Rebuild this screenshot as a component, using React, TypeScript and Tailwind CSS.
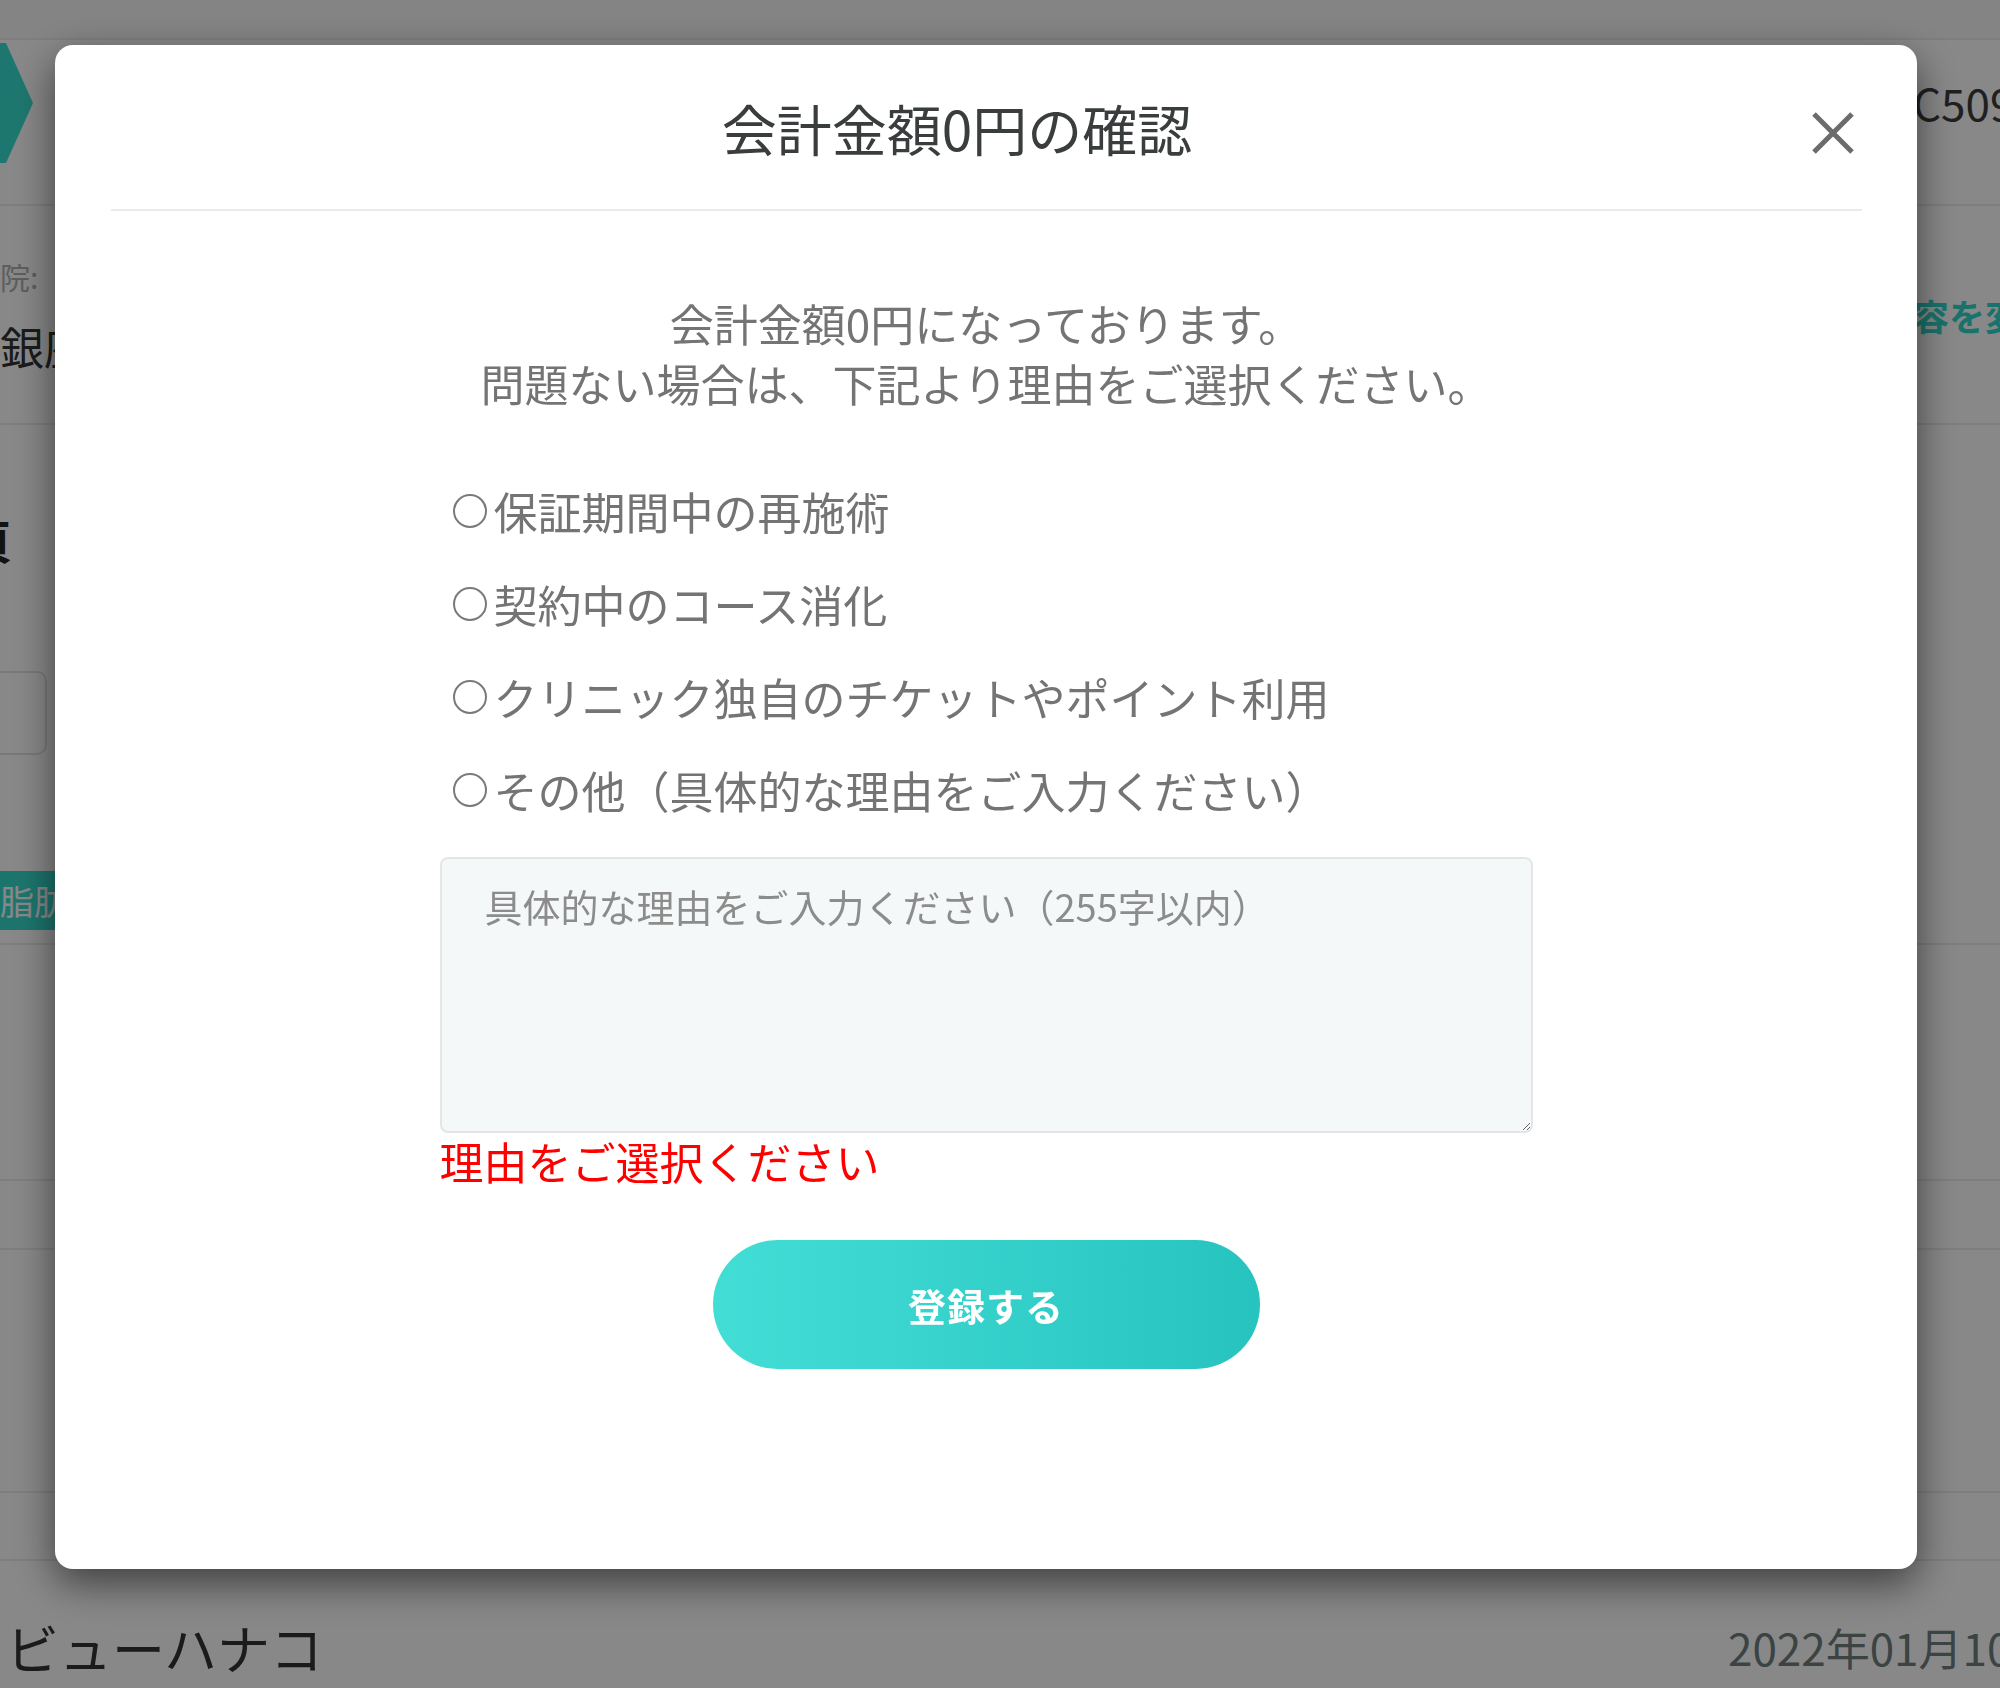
const reasons = [
    "保証期間中の再施術",
    "契約中のコース消化",
    "クリニック独自のチケットやポイント利用",
    "その他（具体的な理由をご入力ください）",
];

const Backdrop = () => {
    return (
        <div className="h-[1688px] w-[2000px] overflow-hidden bg-white text-[#3c3c3c]">
            <div className="h-[40px] border-b-2 border-[#ececec] bg-[#f8f8f8]" />
            <div className="flex h-[164px] items-start justify-between">
                <svg width="33" height="120" viewBox="0 0 33 120" className="mt-[3px]">
                    <polygon points="0,0 6,0 33,60 6,120 0,120" fill="#38e0d2" />
                </svg>
                <div className="mt-[32px] w-[87px] overflow-hidden whitespace-nowrap text-[44px] leading-[60px]">
                    C5098
                </div>
            </div>
            <div className="flex h-[221px] justify-between border-y-2 border-[#ececec]">
                <div className="w-[60px] overflow-hidden whitespace-nowrap pt-[50px]">
                    <div className="text-[30px] leading-[40px] text-[#b0b0b0]">院:</div>
                    <div className="mt-[20px] text-[44px] leading-[60px] text-[#333]">銀座</div>
                </div>
                <div className="w-[87px] overflow-hidden whitespace-nowrap pt-[84px] text-[36px] font-bold leading-[50px] text-[#30d6ca]">
                    容を変更
                </div>
            </div>
            <div className="h-[433px] w-[60px] overflow-hidden">
                <div className="-ml-[34px] mt-[84px] whitespace-nowrap text-[46px] font-bold leading-[60px] text-[#222]">
                    頁
                </div>
                <div className="-ml-[20px] mt-[102px] h-[84px] w-[67px] rounded-[10px] border-2 border-[#e2e2e2]" />
            </div>
            <div className="flex h-[87px] items-center border-b-2 border-[#ececec]">
                <div className="w-[55px] overflow-hidden whitespace-nowrap bg-[#36dccd] text-[34px] leading-[59px] text-white">
                    脂肪吸引
                </div>
            </div>
            <div className="h-[236px] border-b-2 border-[#ececec]" />
            <div className="h-[69px] border-b-2 border-[#ececec]" />
            <div className="h-[243px] border-b-2 border-[#ececec]" />
            <div className="h-[68px] border-b-2 border-[#ececec]" />
            <div className="flex items-center justify-between pl-[6px] pt-[54px]">
                <span className="text-[53px] leading-[64px] text-[#333]">ビューハナコ</span>
                <span className="w-[272px] overflow-hidden whitespace-nowrap text-[44px] leading-[64px] text-[#6f7f7f]">
                    2022年01月10日
                </span>
            </div>
        </div>
    );
};

const ZeroAmountModal = () => {
    return (
        <div className="fixed inset-0 flex items-start bg-[rgba(0,0,0,0.467)] pl-[55px] pt-[45px]">
            <div className="flex w-[1862px] flex-col items-center rounded-[18px] bg-white pb-[200px] shadow-[0_14px_40px_rgba(0,0,0,0.55)]">
                <div className="flex h-[166px] w-[1751px] items-center border-b-2 border-[#e9ecec]">
                    <h2 className="flex-1 text-center text-[55px] font-normal leading-[70px] text-[#3a3d3d]">
                        会計金額0円の確認
                    </h2>
                    <button className="mt-[12px] flex h-[58px] w-[58px] items-center justify-center">
                        <svg width="46" height="44" viewBox="0 0 46 44">
                            <path d="M4 3 L42 41 M42 3 L4 41" stroke="#6b6b6b" strokeWidth="5" strokeLinecap="butt" />
                        </svg>
                    </button>
                </div>

                <p className="mt-[82px] text-center text-[44px] leading-[60px] text-[#747474]">
                    会計金額0円になっております。
                    <br />
                    問題ない場合は、下記より理由をご選択ください。
                </p>

                <div className="mt-[68px] flex w-[1093px] flex-col gap-[33px] pl-[13px]">
                    {reasons.map((reason) => (
                        <label key={reason} className="flex h-[60px] items-center gap-[7px] text-[44px] leading-[60px] text-[#747474]">
                            <span className="h-[34px] w-[34px] shrink-0 rounded-full border-[2.5px] border-[#7a7a7a]" />
                            <span>{reason}</span>
                        </label>
                    ))}
                </div>

                <div className="mt-[37px] w-[1093px]">
                    <textarea
                        className="block h-[276px] w-full rounded-[8px] border-2 border-[#e4e6e6] bg-[#f5f8f8] px-[43px] pt-[22px] text-[38px] leading-[50px] text-[#555] outline-none placeholder:text-[#8c8c8c]"
                        placeholder="具体的な理由をご入力ください（255字以内）"
                    />
                    <p className="text-[44px] leading-[56px] text-[#ff0000]">理由をご選択ください</p>
                </div>

                <button className="mt-[51px] flex h-[129px] w-[547px] items-center justify-center rounded-full bg-linear-to-r from-[#42ded6] to-[#26c3bf] text-[38px] font-bold tracking-[1px] text-white">
                    登録する
                </button>
            </div>
        </div>
    );
};

export default function App() {
    return (
        <div className="relative font-['Noto_Sans_CJK_JP','Liberation_Sans',sans-serif]">
            <Backdrop />
            <ZeroAmountModal />
        </div>
    );
}
